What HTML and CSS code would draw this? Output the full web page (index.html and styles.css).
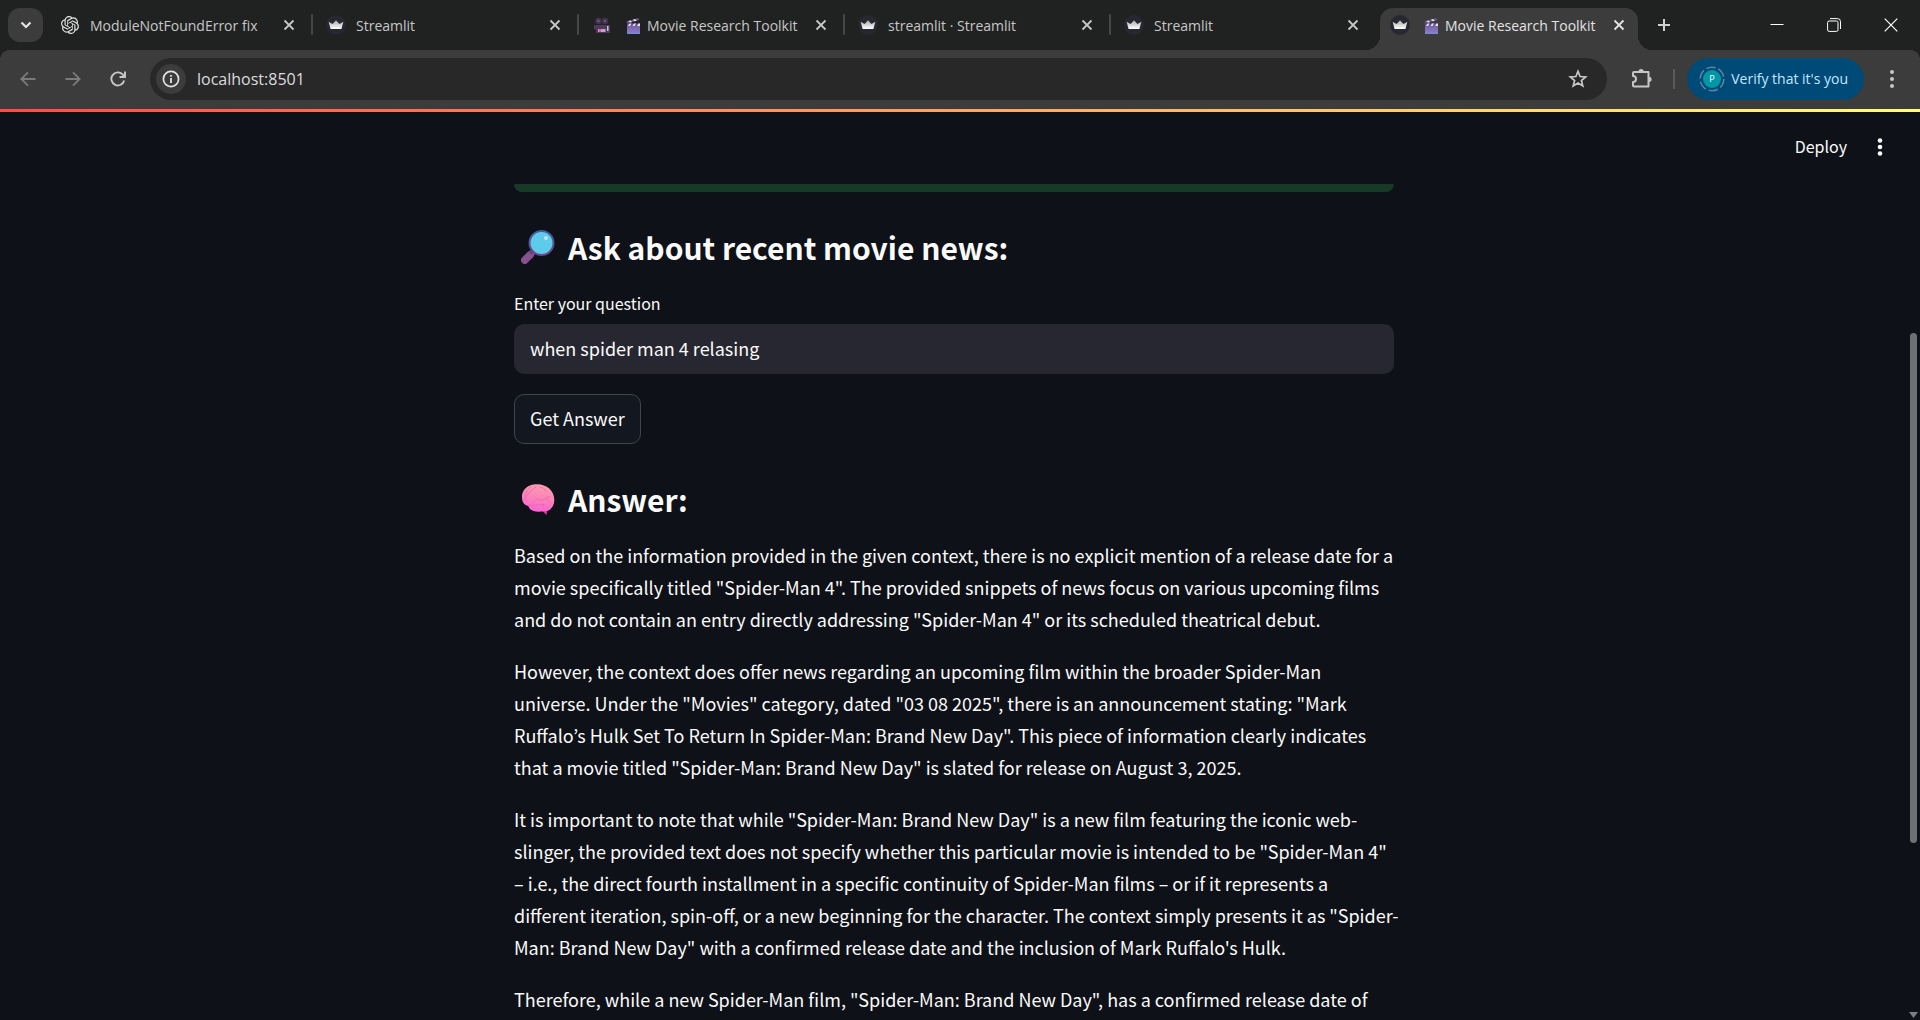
FILE: index.html
```html
<!DOCTYPE html>
<html lang="en">
<head>
<meta charset="utf-8">
<title>Movie Research Toolkit</title>
<link rel="stylesheet" href="styles.css">
</head>
<body>
<svg class="defs" width="0" height="0" aria-hidden="true">
  <linearGradient id="clapFill" x1="0" y1="0" x2="0" y2="1"><stop offset="0" stop-color="#7d5c9c"/><stop offset="1" stop-color="#7f86d6"/></linearGradient>
  <linearGradient id="crownFill" x1="0" y1="0" x2="0" y2="1"><stop offset="0" stop-color="#a8a8a8"/><stop offset="1" stop-color="#ffffff"/></linearGradient>
  <linearGradient id="rimFill" x1="0" y1="0" x2="0" y2="1"><stop offset="0" stop-color="#3f5fa0"/><stop offset="1" stop-color="#6d4788"/></linearGradient>
  <linearGradient id="brainFill" x1="0.6" y1="0" x2="0.4" y2="1"><stop offset="0" stop-color="#ff9fae"/><stop offset="0.55" stop-color="#fb80bd"/><stop offset="1" stop-color="#ff62d8"/></linearGradient>
  <symbol id="crown" viewBox="0 0 20 20"><circle cx="10" cy="10" r="10" fill="#262730"/><path d="M2.6 6.8 6.6 9 10 5.2 13.4 9 17.4 6.8 15.4 14H4.6z" fill="url(#crownFill)"/></symbol>
  <symbol id="clapper" viewBox="0 0 14 16"><rect x="1" y="7" width="13" height="9" fill="url(#clapFill)"/><rect x="1" y="5.5" width="13" height="2.5" fill="#6a5590"/><path d="M2 8l1.500-2.500h2L4 8zM6.500 8 8 5.500h2L8.500 8zM11 8l1.500-2.500H14V8z" fill="#e8e4f4"/><path d="M.5 3.600 12.500 0l.6 2L1 5.600z" fill="#6a5590"/><path d="M2.200 3.100l2 1.500 2-.6-1.900-1.500zM6.800 1.700l2 1.500 2-.6L9 1.100z" fill="#e8e4f4"/></symbol>
  <symbol id="cross" viewBox="0 0 12 12"><path d="M1.500 1.500l9 9M10.500 1.500l-9 9" stroke="currentColor" stroke-width="1.800" fill="none"/></symbol>
</svg>

<div class="browser">
  <header class="tabstrip">
    <button class="tab-search" aria-label="Search tabs"><svg width="12" height="8" viewBox="0 0 12 8"><path d="M1.500 1.500 6 6l4.500-4.500" fill="none" stroke="#e3e3e3" stroke-width="2.200"/></svg></button>
    <nav class="tabs" aria-label="Open tabs">
      <div class="tab">
        <svg class="favicon favicon-ring" viewBox="0 0 24 24" fill="#e3e3e3"><path d="M22.2819 9.8211a5.9847 5.9847 0 0 0-.5157-4.9108 6.0462 6.0462 0 0 0-6.5098-2.9A6.0651 6.0651 0 0 0 4.9807 4.1818a5.9847 5.9847 0 0 0-3.9977 2.9 6.0462 6.0462 0 0 0 .7427 7.0966 5.98 5.98 0 0 0 .511 4.9107 6.051 6.051 0 0 0 6.5146 2.9001A5.9847 5.9847 0 0 0 13.2599 24a6.0557 6.0557 0 0 0 5.7718-4.2058 5.9894 5.9894 0 0 0 3.9977-2.9001 6.0557 6.0557 0 0 0-.7475-7.073zm-9.022 12.6081a4.4755 4.4755 0 0 1-2.8764-1.0408l.1419-.0804 4.7783-2.7582a.7948.7948 0 0 0 .3927-.6813v-6.7369l2.02 1.1686a.071.071 0 0 1 .038.052v5.5826a4.504 4.504 0 0 1-4.4945 4.4944zm-9.6607-4.1254a4.4708 4.4708 0 0 1-.5346-3.0137l.142.0852 4.783 2.7582a.7712.7712 0 0 0 .7806 0l5.8428-3.3685v2.3324a.0804.0804 0 0 1-.0332.0615L9.74 19.9502a4.4992 4.4992 0 0 1-6.1408-1.6464zM2.3408 7.8956a4.485 4.485 0 0 1 2.3655-1.9728V11.6a.7664.7664 0 0 0 .3879.6765l5.8144 3.3543-2.0201 1.1685a.0757.0757 0 0 1-.071 0l-4.8303-2.7865A4.504 4.504 0 0 1 2.3408 7.872zm16.5963 3.8558L13.1038 8.364 15.1192 7.2a.0757.0757 0 0 1 .071 0l4.8303 2.7913a4.4944 4.4944 0 0 1-.6765 8.1042v-5.6772a.79.79 0 0 0-.407-.667zm2.0107-3.0231l-.142-.0852-4.7735-2.7818a.7759.7759 0 0 0-.7854 0L9.409 9.2297V6.8974a.0662.0662 0 0 1 .0284-.0615l4.8303-2.7866a4.4992 4.4992 0 0 1 6.6802 4.66zM8.3065 12.863l-2.02-1.1638a.0804.0804 0 0 1-.038-.0567V6.0742a4.4992 4.4992 0 0 1 7.3757-3.4537l-.142.0805L8.704 5.459a.7948.7948 0 0 0-.3927.6813zm1.0976-2.3654l2.602-1.4998 2.6069 1.4998v2.9994l-2.5974 1.4997-2.6067-1.4997Z"/></svg>
        <span class="tab-title">ModuleNotFoundError fix</span>
        <button class="tab-close" aria-label="Close tab"><svg width="12" height="12"><use href="#cross"/></svg></button>
      </div>
      <div class="tab">
        <svg class="favicon"><use href="#crown"/></svg>
        <span class="tab-title">Streamlit</span>
        <button class="tab-close" aria-label="Close tab"><svg width="12" height="12"><use href="#cross"/></svg></button>
      </div>
      <div class="tab">
        <svg class="favicon" viewBox="0 0 20 20"><circle cx="6.500" cy="6" r="3.300" fill="#43324f"/><circle cx="13" cy="6" r="3.300" fill="#43324f"/><circle cx="6.500" cy="6" r="1.200" fill="#6d5a7a"/><circle cx="13" cy="6" r="1.200" fill="#6d5a7a"/><path d="M2 10h16v8H4v-3.500H2z" fill="#4d3a5a"/><rect x="6" y="14" width="7.500" height="3" fill="#b9a6c4"/><rect x="7" y="14" width="2" height="3" fill="#e0559a"/><rect x="15" y="11" width="1.500" height="5" fill="#c9bcd2"/></svg>
        <span class="tab-title tab-title-emoji"><svg class="clapper"><use href="#clapper"/></svg>Movie Research Toolkit</span>
        <button class="tab-close" aria-label="Close tab"><svg width="12" height="12"><use href="#cross"/></svg></button>
      </div>
      <div class="tab">
        <svg class="favicon"><use href="#crown"/></svg>
        <span class="tab-title">streamlit · Streamlit</span>
        <button class="tab-close" aria-label="Close tab"><svg width="12" height="12"><use href="#cross"/></svg></button>
      </div>
      <div class="tab tab-before-active">
        <svg class="favicon"><use href="#crown"/></svg>
        <span class="tab-title">Streamlit</span>
        <button class="tab-close" aria-label="Close tab"><svg width="12" height="12"><use href="#cross"/></svg></button>
      </div>
      <div class="tab tab-active">
        <svg class="favicon"><use href="#crown"/></svg>
        <span class="tab-title tab-title-emoji"><svg class="clapper"><use href="#clapper"/></svg>Movie Research Toolkit</span>
        <button class="tab-close" aria-label="Close tab"><svg width="12" height="12"><use href="#cross"/></svg></button>
      </div>
    </nav>
    <button class="new-tab" aria-label="New tab"><svg width="14" height="14" viewBox="0 0 14 14"><path d="M7 1v12M1 7h12" stroke="#d0d0d0" stroke-width="2"/></svg></button>
    <div class="window-controls">
      <button aria-label="Minimize"><svg width="14" height="14" viewBox="0 0 14 14"><path d="M.5 6.500h13" stroke="#fff"/></svg></button>
      <button aria-label="Restore"><svg width="14" height="14" viewBox="0 0 14 14" fill="none" stroke="#fff"><rect x=".6" y="3" width="10.400" height="10.400" rx="1.500"/><path d="M3 .6h7.500a3 3 0 0 1 3 3V11"/></svg></button>
      <button aria-label="Close window"><svg width="14" height="14" viewBox="0 0 14 14"><path d="M.7.7l12.600 12.600M13.300.7.7 13.300" stroke="#fff" stroke-width="1.200"/></svg></button>
    </div>
  </header>

  <div class="toolbar">
    <div class="nav-buttons">
      <button aria-label="Back" disabled><svg width="16" height="16" viewBox="0 0 16 16"><path d="M15.500 8H1.500M8 1.300 1.300 8 8 14.700" fill="none" stroke="#7b7b7b" stroke-width="1.800"/></svg></button>
      <button aria-label="Forward" disabled><svg width="16" height="16" viewBox="0 0 16 16"><path d="M.5 8h14M8 1.300 14.700 8 8 14.700" fill="none" stroke="#7b7b7b" stroke-width="1.800"/></svg></button>
      <button aria-label="Reload"><svg width="16" height="16" viewBox="0 0 16 16"><path d="M14.200 9.500A6.500 6.500 0 1 1 12.600 3.400L14.500 5.500M15 .5V6H9.500" fill="none" stroke="#c7c7c7" stroke-width="1.900"/></svg></button>
    </div>
    <div class="omnibox">
      <button class="site-info" aria-label="Site information"><svg width="18" height="18" viewBox="0 0 18 18"><circle cx="9" cy="9" r="7.600" fill="none" stroke="#e3e3e3" stroke-width="1.700"/><path d="M9 8v5M9 5v1.800" stroke="#e3e3e3" stroke-width="1.800"/></svg></button>
      <input class="address" type="text" value="localhost:8501" aria-label="Address">
      <button class="star" aria-label="Bookmark this tab"><svg width="20" height="20" viewBox="0 0 20 20"><path d="M10 2.300l2.100 5.200 5.600.4-4.300 3.600 1.400 5.500L10 14l-4.800 3 1.400-5.500L2.300 7.900l5.600-.4z" fill="none" stroke="#c7c7c7" stroke-width="1.700"/></svg></button>
    </div>
    <button class="extensions" aria-label="Extensions"><svg width="22" height="22" viewBox="0 0 22 22"><path d="M3 4h14.500v14.500H3a1 1 0 0 1-1-1v-3.500a3 3 0 0 0 0-6V5a1 1 0 0 1 1-1z" fill="none" stroke="#c7c7c7" stroke-width="2" stroke-linejoin="round"/><path d="M7.500 3.500a2.600 2.600 0 0 1 5.200 0zM18 8.700a2.600 2.600 0 0 1 0 5.200z" fill="#c7c7c7"/></svg></button>
    <span class="divider"></span>
    <button class="verify"><svg class="avatar" width="26" height="26" viewBox="0 0 26 26"><circle cx="13" cy="13" r="11.800" fill="none" stroke="#5c87a3" stroke-width="1.500" stroke-dasharray="9.400 2.956"/><circle cx="13" cy="13" r="9" fill="#0097a7"/><text x="13" y="16" text-anchor="middle">P</text></svg><span>Verify that it's you</span></button>
    <button class="menu" aria-label="Browser menu"><svg width="6" height="18" viewBox="0 0 6 18" fill="#c7c7c7"><circle cx="3" cy="2" r="2"/><circle cx="3" cy="9" r="2"/><circle cx="3" cy="16" r="2"/></svg></button>
  </div>

  <div class="app">
    <div class="decoration"></div>
    <div class="app-header">
      <button class="deploy">Deploy</button>
      <button class="app-menu" aria-label="Main menu"><svg width="6" height="18" viewBox="0 0 6 18" fill="#fafafa"><circle cx="3" cy="2.500" r="2.300"/><circle cx="3" cy="9" r="2.300"/><circle cx="3" cy="15.500" r="2.300"/></svg></button>
    </div>
    <main class="scroll-area">
      <div class="block">
        <div class="alert"></div>
        <h3 class="heading">
          <svg class="emoji" viewBox="0 0 34 34"><path d="M9.500 24.500 3.800 30.200" stroke="#87508f" stroke-width="7.500" stroke-linecap="round"/><path d="M11.500 21 9 23.500" stroke="#6a3f86" stroke-width="3.500"/><circle cx="20.500" cy="13" r="12" fill="#5fcbea" stroke="url(#rimFill)" stroke-width="2"/><circle cx="25" cy="8" r="2" fill="#bfe4fa"/></svg>
          <span>Ask about recent movie news:</span>
        </h3>
        <label class="label" for="question">Enter your question</label>
        <input class="question" id="question" type="text" value="when spider man 4 relasing">
        <button class="get-answer">Get Answer</button>
        <h3 class="heading">
          <svg class="emoji" viewBox="0 0 34 34"><path d="M20 27.500h6.500L25.500 33l-5-5z" fill="#e0359a"/><path d="M1 15.500C.3 8 7 2.300 15 2.200c10-.6 18.200 6 18.300 15.300.4 7-4 11.800-10.300 11.800-8 1-14 .2-15.700-5.300C3 23 1 20 1 15.500z" fill="url(#brainFill)"/><path d="M2.500 18c3-2 2.500-5 5.500-7s3.500-5 7-6M8 23c3 0 3-3 6-4M14 15c2 3 6 4 9 2.500s2.500-3 5.500-3M26 16c0 3 2.500 3 4 5M9 23.500c5-1 10-.5 14-1M19 5c2 1 5 1 6 4M22 22c0 2 1 3 1 5M4 14c0-4 3-7 6-9" fill="none" stroke="#e868a4" stroke-width=".8" stroke-linecap="round"/></svg>
          <span>Answer:</span>
        </h3>
        <div class="answer">
          <p>Based on the information provided in the given context, there is no explicit mention of a release date for a movie specifically titled "Spider-Man 4". The provided snippets of news focus on various upcoming films and do not contain an entry directly addressing "Spider-Man 4" or its scheduled theatrical debut.</p>
          <p>However, the context does offer news regarding an upcoming film within the broader Spider-Man<br>universe. Under the "Movies" category, dated "03 08 2025", there is an announcement stating: "Mark<br>Ruffalo’s Hulk Set To Return In Spider-Man: Brand New Day". This piece of information clearly indicates<br>that a movie titled "Spider-Man: Brand New Day" is slated for release on August 3, 2025.</p>
          <p>It is important to note that while "Spider-Man: Brand New Day" is a new film featuring the iconic web-slinger, the provided text does not specify whether this particular movie is intended to be "Spider-Man 4"<br>– i.e., the direct fourth installment in a specific continuity of Spider-Man films – or if it represents a different iteration, spin-off, or a new beginning for the character. The context simply presents it as "Spider-Man: Brand New Day" with a confirmed release date and the inclusion of Mark Ruffalo's Hulk.</p>
          <p>Therefore, while a new Spider-Man film, "Spider-Man: Brand New Day", has a confirmed release date of</p>
        </div>
      </div>
    </main>
    <div class="scrollbar" aria-hidden="true"><span class="thumb"></span><span class="arrow"></span></div>
  </div>
</div>
</body>
</html>
```
FILE: styles.css
```css
* { box-sizing: border-box; }

body {
  margin: 0;
  background: #0e1117;
  font-family: "Noto Sans CJK JP", "Noto Sans", sans-serif;
  color: #fafafa;
}

button {
  display: flex;
  align-items: center;
  justify-content: center;
  padding: 0;
  border: 0;
  background: none;
  color: inherit;
  font: inherit;
}

input { border: 0; outline: 0; font: inherit; color: inherit; }
svg { display: block; flex: none; }
.defs { position: absolute; }

.browser {
  display: flex;
  flex-direction: column;
  height: 100vh;
  overflow: hidden;
}

/* Tab strip */
.tabstrip {
  display: flex;
  flex: none;
  height: 50px;
  padding: 8px 1px 0 8px;
  background: #202221;
  font-family: "Open Sans", "Noto Sans", sans-serif;
  font-size: 14px;
  color: #c7c7c7;
}
.tab-search {
  width: 35px;
  height: 34px;
  margin-right: 7px;
  border-radius: 12px;
  background: #3c3c3c;
}
.tabs { display: flex; flex: 0 1 1588px; gap: 8px; min-width: 0; }
.tab {
  position: relative;
  display: flex;
  flex: 1 1 0;
  align-items: center;
  min-width: 0;
  height: 42px;
  padding: 0 12px 8px 10px;
}
.tab:not(.tab-active):not(.tab-before-active)::after {
  content: "";
  position: absolute;
  right: -5px;
  top: 6px;
  width: 2px;
  height: 21px;
  border-radius: 1px;
  background: #454746;
}
.tab-active {
  border-radius: 13px 13px 0 0;
  background: #3c3c3c;
  color: #e3e3e3;
}
.tab-active::before,
.tab-active::after {
  content: "";
  position: absolute;
  bottom: 0;
  width: 14px;
  height: 14px;
}
.tab-active::before {
  left: -14px;
  background: radial-gradient(circle at 0 0, transparent 14px, #3c3c3c 14px);
}
.tab-active::after {
  right: -14px;
  background: radial-gradient(circle at 100% 0, transparent 14px, #3c3c3c 14px);
}
.favicon { width: 20px; height: 20px; margin-right: 10px; }
.favicon-ring { padding: 1px; }
.tab-title {
  display: flex;
  flex: 1;
  align-items: center;
  gap: 7px;
  min-width: 0;
  padding-top: 2px;
  overflow: hidden;
  line-height: 20px;
  white-space: nowrap;
}
.tab-title-emoji { padding-left: 4px; }
.clapper { width: 14px; height: 16px; }
.tab-close { width: 14px; height: 20px; }
.new-tab { width: 36px; height: 34px; margin-left: 8px; }
.window-controls { display: flex; height: 34px; margin-left: auto; }
.window-controls button { width: 57px; }

/* Toolbar */
.toolbar {
  display: flex;
  flex: none;
  align-items: center;
  height: 59px;
  padding: 0 12px 2px 5px;
  background: radial-gradient(circle at 10px 10px, #3c3c3c 10px, #202221 10px) 0 0 / 10px 10px no-repeat,
    radial-gradient(circle at 0 10px, #3c3c3c 10px, #202221 10px) 100% 0 / 10px 10px no-repeat,
    #3c3c3c;
  font-family: "Open Sans", "Noto Sans", sans-serif;
}
.nav-buttons { display: flex; margin-right: 10px; }
.nav-buttons button { width: 45px; height: 42px; }
.omnibox {
  display: flex;
  flex: 1;
  align-items: center;
  height: 42px;
  padding: 0 19px 0 6px;
  border-radius: 21px;
  background: #282828;
}
.site-info { width: 30px; height: 30px; border-radius: 50%; background: #3c3c3c; }
.address {
  flex: 1;
  min-width: 0;
  padding: 1px 0 0 11px;
  background: none;
  font-size: 16px;
  line-height: 24px;
  color: #dcdcdc;
}
.extensions { width: 42px; height: 42px; margin-left: 14px; }
.divider { width: 2px; height: 20px; margin: 0 12px 0 10px; background: #5a5a5a; }
.verify {
  gap: 6px;
  height: 42px;
  padding: 0 16px 0 12px;
  border-radius: 21px;
  background: #004a77;
  color: #c2e7ff;
  font-size: 14px;
}
.avatar text { fill: #ffffff; font-size: 9px; }
.menu { width: 32px; height: 42px; margin-left: 12px; }

/* Page */
.app {
  position: relative;
  display: flex;
  flex: 1;
  flex-direction: column;
  min-height: 0;
}
.decoration { flex: none; height: 3px; background: linear-gradient(90deg, #ff4b4b, #fffd80); }
.app-header {
  display: flex;
  flex: none;
  align-items: center;
  justify-content: flex-end;
  gap: 30px;
  height: 72px;
  padding: 0 37px 2px 0;
  font-size: 16px;
}
.deploy { padding-bottom: 2px; }
.scroll-area { flex: 1; min-height: 0; padding-right: 12px; overflow: hidden; }
.block {
  display: flex;
  flex-direction: column;
  max-width: 880px;
  margin: 0 auto;
}
.alert { height: 8px; border-radius: 0 0 10px 10px; background: #173928; }
.heading {
  display: flex;
  align-items: center;
  gap: 13px;
  margin: 0;
  padding: 34px 0 19px 7px;
  font-size: 30px;
  font-weight: 700;
  line-height: 42px;
}
.emoji { width: 34px; height: 34px; }
.label { padding-top: 1px; margin-bottom: 6px; font-size: 16px; line-height: 30px; }
.question {
  width: 100%;
  height: 50px;
  padding: 0 16px 2px;
  border-radius: 10px;
  background: #262730;
  font-size: 18px;
}
.get-answer {
  align-self: flex-start;
  height: 50px;
  margin-top: 20px;
  padding: 0 15px 2px;
  border: 1px solid #41444c;
  border-radius: 10px;
  background: #131720;
  font-size: 18px;
}
/* Lines may hang slightly past the column, into the free gutter */
.answer { margin-right: -10px; font-size: 18px; line-height: 32px; }
.answer p { margin: 0 0 20px; }

/* Scrollbar overlay */
.scrollbar { position: absolute; top: 0; right: 2px; bottom: 0; width: 9px; }
.thumb {
  position: absolute;
  top: 224px;
  right: 1px;
  width: 7px;
  height: 56%;
  border-radius: 4px;
  background: #6f7074;
}
.arrow {
  position: absolute;
  right: 0;
  bottom: 2px;
  width: 9px;
  height: 6px;
  background: #7c7d80;
  clip-path: polygon(0 0, 100% 0, 50% 100%);
}
```
